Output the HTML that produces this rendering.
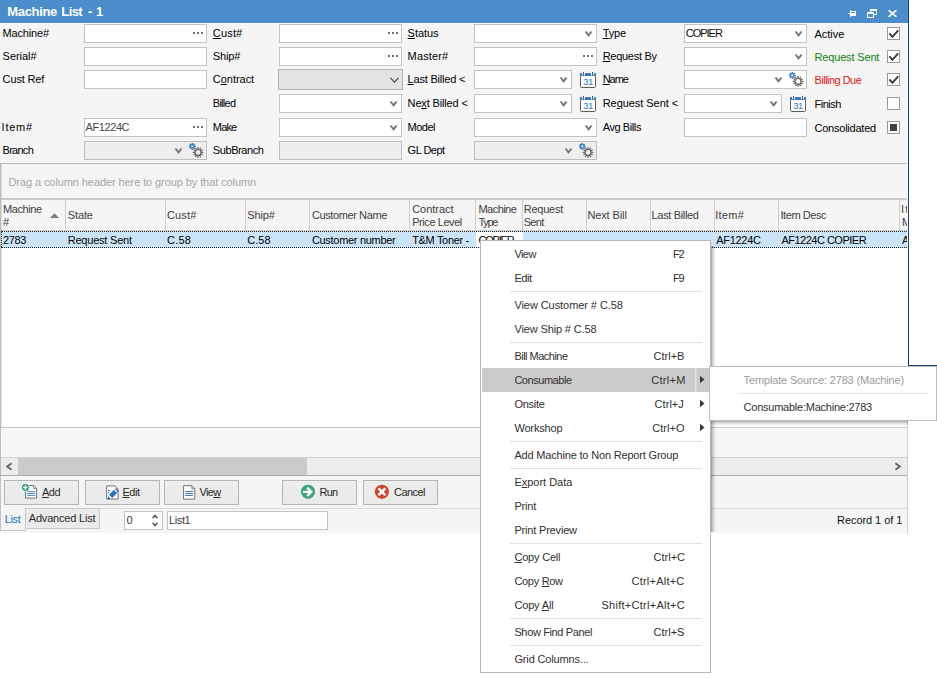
<!DOCTYPE html>
<html>
<head>
<meta charset="utf-8">
<title>Machine List - 1</title>
<style>
*{box-sizing:border-box;margin:0;padding:0}
html,body{width:937px;height:679px;overflow:hidden;background:#fff}
body{font-family:"Liberation Sans",sans-serif;font-size:11px;color:#000;position:relative}
div,span,svg{position:absolute}
u{text-decoration:underline;text-underline-offset:1px;text-decoration-thickness:1px}
#win{left:0;top:0;width:908px;height:533px;background:#f5f5f5}
#title{left:0;top:0;width:908px;height:23px;background:#4b8ccb}
#title .t{left:7px;top:3px;color:#fff;font-weight:bold;font-size:13px;line-height:17px;white-space:nowrap}
.l{line-height:14px;white-space:nowrap;height:14px}
.i{height:19px;background:#fff;border:1px solid #c3c3c3;white-space:nowrap;overflow:hidden;color:#404040}
.i .l{top:1px;left:1px}
.i.d{background:#eeeeee;border-color:#bdbdbd}
.dots{right:3px;top:7px;width:10px;height:2px;background:linear-gradient(90deg,#707070 0 2px,transparent 2px 4px,#707070 4px 6px,transparent 6px 8px,#707070 8px 10px)}
.cb{width:13px;height:13px;background:#fff;border:1px solid #9a9a9a}
.h{top:200px;height:30px;border-right:1px solid #cdcdcd;color:#404040;white-space:nowrap;overflow:hidden}
.btn{top:480px;height:25px;background:linear-gradient(#eeeeee,#e9e9e9);border:1px solid #b4b4b4;color:#2a2a2a}
.m{color:#303030}
.sep{left:510px;width:192px;height:1px;background:#e1e1e1}
</style>
</head>
<body>
<div id="win">
<div id="title">
<span class="l" style="left:7.3px;top:3px;letter-spacing:-0.35px;color:#fff;font-size:13px;font-weight:bold;line-height:17px;height:17px">Machine</span>
<span class="l" style="left:61.3px;top:3px;letter-spacing:-0.60px;color:#fff;font-size:13px;font-weight:bold;line-height:17px;height:17px">List</span>
<span class="l" style="left:88.1px;top:3px;letter-spacing:0.00px;color:#fff;font-size:13px;font-weight:bold;line-height:17px;height:17px">-</span>
<span class="l" style="left:96.1px;top:3px;letter-spacing:0.00px;color:#fff;font-size:13px;font-weight:bold;line-height:17px;height:17px">1</span>
<svg style="left:848px;top:10px" width="9" height="7" viewBox="0 0 9 7" fill="#fff" shape-rendering="crispEdges"><rect x="0" y="3" width="2" height="1"/><rect x="2" y="0" width="1" height="7"/><rect x="3" y="1" width="5" height="1"/><rect x="3" y="3" width="5" height="3"/><rect x="7" y="1" width="1" height="5"/></svg>
<svg style="left:867px;top:9px" width="10" height="9" viewBox="0 0 10 9" fill="#fff" shape-rendering="crispEdges"><rect x="3" y="0" width="7" height="2"/><rect x="3" y="0" width="1" height="3"/><rect x="9" y="0" width="1" height="6"/><rect x="7" y="5" width="3" height="1"/><rect x="0" y="3" width="7" height="2"/><rect x="0" y="3" width="1" height="6"/><rect x="6" y="3" width="1" height="6"/><rect x="0" y="8" width="7" height="1"/></svg>
<svg style="left:888px;top:10px" width="9" height="7" viewBox="0 0 9 7"><path d="M0.600 0.200L8.400 6.800M8.400 0.200L0.600 6.800" stroke="#fff" stroke-width="1.750"/></svg>
</div>
<span class="l" style="left:2.6px;top:26px;letter-spacing:-0.17px">Machine#</span>
<div class="i" style="left:84px;top:24px;width:123px"><span class="dots"></span></div>
<span class="l" style="left:2.6px;top:49px;letter-spacing:-0.03px">Serial#</span>
<div class="i" style="left:84px;top:47px;width:123px"></div>
<span class="l" style="left:2.6px;top:72px;letter-spacing:-0.14px">Cust Ref</span>
<div class="i" style="left:84px;top:70px;width:123px"></div>
<span class="l" style="left:1.6px;top:120px;letter-spacing:0.75px">Item#</span>
<div class="i" style="left:84px;top:118px;width:123px"><span class="dots"></span></div>
<span class="l" style="left:85.6px;top:120px;letter-spacing:-0.42px;color:#4a4a4a">AF1224C</span>
<span class="l" style="left:2.6px;top:143px;letter-spacing:-0.74px">Branch</span>
<div class="i d" style="left:84px;top:141px;width:123px"><svg style="left:89px;top:5px" width="9" height="8" viewBox="0 0 9 8"><g transform="translate(0.5 0.7)"><path d="M1 0.800L4 4.700L7 0.800" fill="none" stroke="#777777" stroke-width="1.950"/></g></svg><svg style="left:103px;top:0px" width="17" height="17" viewBox="0 0 17 17"><g transform="translate(0.3 0.4)"><rect x="9.200" y="4.600" width="1.200" height="10.800" fill="#686868" transform="rotate(0 9.800 10)"/><rect x="9.200" y="4.600" width="1.200" height="10.800" fill="#686868" transform="rotate(30 9.800 10)"/><rect x="9.200" y="4.600" width="1.200" height="10.800" fill="#686868" transform="rotate(60 9.800 10)"/><rect x="9.200" y="4.600" width="1.200" height="10.800" fill="#686868" transform="rotate(90 9.800 10)"/><rect x="9.200" y="4.600" width="1.200" height="10.800" fill="#686868" transform="rotate(120 9.800 10)"/><rect x="9.200" y="4.600" width="1.200" height="10.800" fill="#686868" transform="rotate(150 9.800 10)"/><circle cx="9.800" cy="10" r="3.600" fill="#686868"/><circle cx="9.800" cy="10" r="2.300" fill="#eeeeee"/><rect x="3.300" y="0.600" width="1.400" height="6.800" fill="#3575bd" transform="rotate(0 4 4)"/><rect x="3.300" y="0.600" width="1.400" height="6.800" fill="#3575bd" transform="rotate(45 4 4)"/><rect x="3.300" y="0.600" width="1.400" height="6.800" fill="#3575bd" transform="rotate(90 4 4)"/><rect x="3.300" y="0.600" width="1.400" height="6.800" fill="#3575bd" transform="rotate(135 4 4)"/><circle cx="4" cy="4" r="2.100" fill="#3575bd"/><circle cx="4" cy="4" r="1.150" fill="#eeeeee"/></g></svg></div>
<span class="l" style="left:212.8px;top:26px;letter-spacing:0.17px"><u>C</u>ust#</span>
<div class="i" style="left:279px;top:24px;width:123px"><span class="dots"></span></div>
<span class="l" style="left:212.8px;top:49px;letter-spacing:-0.15px">Ship#</span>
<div class="i" style="left:279px;top:47px;width:123px"><span class="dots"></span></div>
<span class="l" style="left:212.8px;top:72px;letter-spacing:-0.03px">C<u>o</u>ntract</span>
<div style="left:278px;top:69px;width:125px;height:21px;background:#e3e3e3;border:1px solid #b2b2b2"><svg style="left:110px;top:7px" width="11" height="7" viewBox="0 0 11 7"><g transform="translate(0.5 0.3)"><path d="M0.900 0.600L5 4.800L9.100 0.600" fill="none" stroke="#484848" stroke-width="1.250"/></g></svg></div>
<span class="l" style="left:212.8px;top:96px;letter-spacing:-0.74px">Billed</span>
<div class="i" style="left:279px;top:94px;width:123px"><svg style="left:109px;top:5px" width="9" height="8" viewBox="0 0 9 8"><g transform="translate(0.6 0.7)"><path d="M1 0.800L4 4.700L7 0.800" fill="none" stroke="#777777" stroke-width="1.950"/></g></svg></div>
<span class="l" style="left:212.8px;top:120px;letter-spacing:-0.83px">Make</span>
<div class="i" style="left:279px;top:118px;width:123px"><svg style="left:109px;top:5px" width="9" height="8" viewBox="0 0 9 8"><g transform="translate(0.6 0.7)"><path d="M1 0.800L4 4.700L7 0.800" fill="none" stroke="#777777" stroke-width="1.950"/></g></svg></div>
<span class="l" style="left:212.8px;top:143px;letter-spacing:-0.41px">SubBranch</span>
<div class="i d" style="left:279px;top:141px;width:123px"></div>
<span class="l" style="left:407.6px;top:26px;letter-spacing:-0.04px"><u>S</u>tatus</span>
<div class="i" style="left:474px;top:24px;width:123px"><svg style="left:109px;top:5px" width="9" height="8" viewBox="0 0 9 8"><g transform="translate(0.6 0.7)"><path d="M1 0.800L4 4.700L7 0.800" fill="none" stroke="#777777" stroke-width="1.950"/></g></svg></div>
<span class="l" style="left:407.6px;top:49px;letter-spacing:0.15px">Master#</span>
<div class="i" style="left:474px;top:47px;width:123px"><span class="dots"></span></div>
<span class="l" style="left:407.6px;top:72px;letter-spacing:-0.20px"><u>L</u>ast Billed &lt;</span>
<div class="i" style="left:474px;top:70px;width:98px"><svg style="left:84px;top:5px" width="9" height="8" viewBox="0 0 9 8"><g transform="translate(0.6 0.7)"><path d="M1 0.800L4 4.700L7 0.800" fill="none" stroke="#777777" stroke-width="1.950"/></g></svg></div>
<svg style="left:580px;top:72px" width="16" height="16" viewBox="0 0 16 16"><rect x="0.5" y="3" width="15" height="12.5" rx="1.2" fill="#fff" stroke="#5c5c5c" stroke-width="1"/><rect x="0" y="1" width="16" height="3" fill="#3a78bf"/><rect x="2" y="0" width="3" height="3.3" fill="#f5f5f5"/><rect x="11" y="0" width="3" height="3.3" fill="#f5f5f5"/><rect x="3" y="0" width="1" height="3.6" fill="#555"/><rect x="12" y="0" width="1" height="3.6" fill="#555"/><text x="8.1" y="13" font-size="9.5" text-anchor="middle" fill="#3a78bf" font-family="Liberation Sans" letter-spacing="-0.4">31</text></svg>
<span class="l" style="left:407.6px;top:96px;letter-spacing:-0.15px">Ne<u>x</u>t Billed &lt;</span>
<div class="i" style="left:474px;top:94px;width:98px"><svg style="left:84px;top:5px" width="9" height="8" viewBox="0 0 9 8"><g transform="translate(0.6 0.7)"><path d="M1 0.800L4 4.700L7 0.800" fill="none" stroke="#777777" stroke-width="1.950"/></g></svg></div>
<svg style="left:580px;top:96px" width="16" height="16" viewBox="0 0 16 16"><rect x="0.5" y="3" width="15" height="12.5" rx="1.2" fill="#fff" stroke="#5c5c5c" stroke-width="1"/><rect x="0" y="1" width="16" height="3" fill="#3a78bf"/><rect x="2" y="0" width="3" height="3.3" fill="#f5f5f5"/><rect x="11" y="0" width="3" height="3.3" fill="#f5f5f5"/><rect x="3" y="0" width="1" height="3.6" fill="#555"/><rect x="12" y="0" width="1" height="3.6" fill="#555"/><text x="8.1" y="13" font-size="9.5" text-anchor="middle" fill="#3a78bf" font-family="Liberation Sans" letter-spacing="-0.4">31</text></svg>
<span class="l" style="left:407.6px;top:120px;letter-spacing:-0.53px">Model</span>
<div class="i" style="left:474px;top:118px;width:123px"><svg style="left:109px;top:5px" width="9" height="8" viewBox="0 0 9 8"><g transform="translate(0.6 0.7)"><path d="M1 0.800L4 4.700L7 0.800" fill="none" stroke="#777777" stroke-width="1.950"/></g></svg></div>
<span class="l" style="left:407.6px;top:143px;letter-spacing:-0.50px">GL Dept</span>
<div class="i d" style="left:474px;top:141px;width:123px"><svg style="left:89px;top:5px" width="9" height="8" viewBox="0 0 9 8"><g transform="translate(0.5 0.7)"><path d="M1 0.800L4 4.700L7 0.800" fill="none" stroke="#777777" stroke-width="1.950"/></g></svg><svg style="left:103px;top:0px" width="17" height="17" viewBox="0 0 17 17"><g transform="translate(0.3 0.4)"><rect x="9.200" y="4.600" width="1.200" height="10.800" fill="#686868" transform="rotate(0 9.800 10)"/><rect x="9.200" y="4.600" width="1.200" height="10.800" fill="#686868" transform="rotate(30 9.800 10)"/><rect x="9.200" y="4.600" width="1.200" height="10.800" fill="#686868" transform="rotate(60 9.800 10)"/><rect x="9.200" y="4.600" width="1.200" height="10.800" fill="#686868" transform="rotate(90 9.800 10)"/><rect x="9.200" y="4.600" width="1.200" height="10.800" fill="#686868" transform="rotate(120 9.800 10)"/><rect x="9.200" y="4.600" width="1.200" height="10.800" fill="#686868" transform="rotate(150 9.800 10)"/><circle cx="9.800" cy="10" r="3.600" fill="#686868"/><circle cx="9.800" cy="10" r="2.300" fill="#eeeeee"/><rect x="3.300" y="0.600" width="1.400" height="6.800" fill="#3575bd" transform="rotate(0 4 4)"/><rect x="3.300" y="0.600" width="1.400" height="6.800" fill="#3575bd" transform="rotate(45 4 4)"/><rect x="3.300" y="0.600" width="1.400" height="6.800" fill="#3575bd" transform="rotate(90 4 4)"/><rect x="3.300" y="0.600" width="1.400" height="6.800" fill="#3575bd" transform="rotate(135 4 4)"/><circle cx="4" cy="4" r="2.100" fill="#3575bd"/><circle cx="4" cy="4" r="1.150" fill="#eeeeee"/></g></svg></div>
<span class="l" style="left:602.7px;top:26px;letter-spacing:-0.13px"><u>T</u>ype</span>
<div class="i" style="left:684px;top:24px;width:123px"><svg style="left:109px;top:5px" width="9" height="8" viewBox="0 0 9 8"><g transform="translate(0.6 0.7)"><path d="M1 0.800L4 4.700L7 0.800" fill="none" stroke="#777777" stroke-width="1.950"/></g></svg></div>
<span class="l" style="left:685.8px;top:26px;letter-spacing:-1.02px;color:#0a0a0a">COPIER</span>
<span class="l" style="left:602.7px;top:49px;letter-spacing:-0.28px"><u>R</u>equest By</span>
<div class="i" style="left:684px;top:47px;width:123px"><svg style="left:109px;top:5px" width="9" height="8" viewBox="0 0 9 8"><g transform="translate(0.6 0.7)"><path d="M1 0.800L4 4.700L7 0.800" fill="none" stroke="#777777" stroke-width="1.950"/></g></svg></div>
<span class="l" style="left:602.7px;top:72px;letter-spacing:-1.03px"><u>N</u>ame</span>
<div class="i" style="left:684px;top:70px;width:123px"><svg style="left:89px;top:5px" width="9" height="8" viewBox="0 0 9 8"><g transform="translate(0.5 0.7)"><path d="M1 0.800L4 4.700L7 0.800" fill="none" stroke="#777777" stroke-width="1.950"/></g></svg><svg style="left:103px;top:0px" width="17" height="17" viewBox="0 0 17 17"><g transform="translate(0.3 0.4)"><rect x="9.200" y="4.600" width="1.200" height="10.800" fill="#686868" transform="rotate(0 9.800 10)"/><rect x="9.200" y="4.600" width="1.200" height="10.800" fill="#686868" transform="rotate(30 9.800 10)"/><rect x="9.200" y="4.600" width="1.200" height="10.800" fill="#686868" transform="rotate(60 9.800 10)"/><rect x="9.200" y="4.600" width="1.200" height="10.800" fill="#686868" transform="rotate(90 9.800 10)"/><rect x="9.200" y="4.600" width="1.200" height="10.800" fill="#686868" transform="rotate(120 9.800 10)"/><rect x="9.200" y="4.600" width="1.200" height="10.800" fill="#686868" transform="rotate(150 9.800 10)"/><circle cx="9.800" cy="10" r="3.600" fill="#686868"/><circle cx="9.800" cy="10" r="2.300" fill="#fff"/><rect x="3.300" y="0.600" width="1.400" height="6.800" fill="#3575bd" transform="rotate(0 4 4)"/><rect x="3.300" y="0.600" width="1.400" height="6.800" fill="#3575bd" transform="rotate(45 4 4)"/><rect x="3.300" y="0.600" width="1.400" height="6.800" fill="#3575bd" transform="rotate(90 4 4)"/><rect x="3.300" y="0.600" width="1.400" height="6.800" fill="#3575bd" transform="rotate(135 4 4)"/><circle cx="4" cy="4" r="2.100" fill="#3575bd"/><circle cx="4" cy="4" r="1.150" fill="#fff"/></g></svg></div>
<span class="l" style="left:602.7px;top:96px;letter-spacing:-0.05px">Re<u>q</u>uest Sent &lt;</span>
<div class="i" style="left:684px;top:94px;width:98px"><svg style="left:84px;top:5px" width="9" height="8" viewBox="0 0 9 8"><g transform="translate(0.6 0.7)"><path d="M1 0.800L4 4.700L7 0.800" fill="none" stroke="#777777" stroke-width="1.950"/></g></svg></div>
<svg style="left:790px;top:96px" width="16" height="16" viewBox="0 0 16 16"><rect x="0.5" y="3" width="15" height="12.5" rx="1.2" fill="#fff" stroke="#5c5c5c" stroke-width="1"/><rect x="0" y="1" width="16" height="3" fill="#3a78bf"/><rect x="2" y="0" width="3" height="3.3" fill="#f5f5f5"/><rect x="11" y="0" width="3" height="3.3" fill="#f5f5f5"/><rect x="3" y="0" width="1" height="3.6" fill="#555"/><rect x="12" y="0" width="1" height="3.6" fill="#555"/><text x="8.1" y="13" font-size="9.5" text-anchor="middle" fill="#3a78bf" font-family="Liberation Sans" letter-spacing="-0.4">31</text></svg>
<span class="l" style="left:602.7px;top:120px;letter-spacing:-0.41px">Avg Bills</span>
<div class="i" style="left:684px;top:118px;width:123px"></div>
<span class="l" style="left:814.5px;top:27px;letter-spacing:-0.02px">Active</span>
<div class="cb" style="left:887px;top:27px"><svg style="left:0;top:0" width="11" height="11" viewBox="0 0 11 11"><path d="M1.4 5.4L4.4 8.9L10.2 2.4" fill="none" stroke="#3a3a3a" stroke-width="1.9"/></svg></div>
<span class="l" style="left:814.5px;top:50px;letter-spacing:-0.16px;color:#128012">Request Sent</span>
<div class="cb" style="left:887px;top:50px"><svg style="left:0;top:0" width="11" height="11" viewBox="0 0 11 11"><path d="M1.4 5.4L4.4 8.9L10.2 2.4" fill="none" stroke="#3a3a3a" stroke-width="1.9"/></svg></div>
<span class="l" style="left:814.5px;top:73px;letter-spacing:-0.53px;color:#e31515">Billing Due</span>
<div class="cb" style="left:887px;top:73px"><svg style="left:0;top:0" width="11" height="11" viewBox="0 0 11 11"><path d="M1.4 5.4L4.4 8.9L10.2 2.4" fill="none" stroke="#3a3a3a" stroke-width="1.9"/></svg></div>
<span class="l" style="left:814.5px;top:97px;letter-spacing:-0.50px">Finish</span>
<div class="cb" style="left:887px;top:97px"></div>
<span class="l" style="left:814.5px;top:121px;letter-spacing:-0.23px">Consolidated</span>
<div class="cb" style="left:887px;top:121px"><span style="left:2px;top:2px;width:7px;height:7px;background:#404040"></span></div>
<div style="left:0;top:163px;width:907px;height:313px;background:#fff;border:1px solid #bcbcbc;border-right:none;border-bottom-color:#ababab"></div>
<div style="left:1px;top:164px;width:906px;height:34px;background:#f5f5f5"></div>
<span class="l" style="left:8.5px;top:175px;letter-spacing:-0.09px;color:#a6a6a6">Drag a column header here to group by that column</span>
<div style="left:1px;top:198px;width:906px;height:2px;background:#c8c8c8"></div>
<div style="left:1px;top:200px;width:906px;height:30px;background:#f5f5f5"></div>
<div style="left:1px;top:230px;width:906px;height:1px;background:#cdcdcd"></div>
<div class="h" style="left:1px;width:65px;"></div>
<span class="l" style="left:3.0px;top:202px;letter-spacing:-0.40px;color:#404040">Machine</span>
<span class="l" style="left:3.0px;top:215px;letter-spacing:0.00px;color:#404040">#</span>
<div class="h" style="left:65px;width:101px;"></div>
<span class="l" style="left:67.7px;top:208px;letter-spacing:-0.10px;color:#404040">State</span>
<div class="h" style="left:165px;width:81px;"></div>
<span class="l" style="left:167.0px;top:208px;letter-spacing:0.15px;color:#404040">Cust#</span>
<div class="h" style="left:245px;width:65px;"></div>
<span class="l" style="left:247.2px;top:208px;letter-spacing:-0.10px;color:#404040">Ship#</span>
<div class="h" style="left:309px;width:101px;"></div>
<span class="l" style="left:311.9px;top:208px;letter-spacing:-0.39px;color:#404040">Customer Name</span>
<div class="h" style="left:409px;width:67px;"></div>
<span class="l" style="left:412.2px;top:202px;letter-spacing:-0.04px;color:#404040">Contract</span>
<span class="l" style="left:412.2px;top:215px;letter-spacing:-0.43px;color:#404040">Price Level</span>
<div class="h" style="left:475px;width:48px;"></div>
<span class="l" style="left:478.5px;top:202px;letter-spacing:-0.55px;color:#404040">Machine</span>
<span class="l" style="left:478.5px;top:215px;letter-spacing:-1.30px;color:#404040">Type</span>
<div class="h" style="left:522px;width:65px;"></div>
<span class="l" style="left:523.7px;top:202px;letter-spacing:-0.23px;color:#404040">Request</span>
<span class="l" style="left:523.7px;top:215px;letter-spacing:-0.67px;color:#404040">Sent</span>
<div class="h" style="left:586px;width:65px;"></div>
<span class="l" style="left:587.4px;top:208px;letter-spacing:-0.11px;color:#404040">Next Bill</span>
<div class="h" style="left:650px;width:65px;"></div>
<span class="l" style="left:651.6px;top:208px;letter-spacing:-0.34px;color:#404040">Last Billed</span>
<div class="h" style="left:714px;width:65px;"></div>
<span class="l" style="left:715.2px;top:208px;letter-spacing:0.27px;color:#404040">Item#</span>
<div class="h" style="left:778px;width:122px;"></div>
<span class="l" style="left:780.4px;top:208px;letter-spacing:-0.41px;color:#404040">Item Desc</span>
<div class="h" style="left:899px;width:8px;border-right:none;"></div>
<span class="l" style="left:901.0px;top:202px;letter-spacing:1.30px;color:#404040;max-width:6px;overflow:hidden">It</span>
<span class="l" style="left:902.0px;top:215px;letter-spacing:0.00px;color:#404040;max-width:6px;overflow:hidden">M</span>
<div style="left:1px;top:164px;width:1px;height:311px;background:rgba(0,0,0,0.10)"></div>
<svg style="left:50px;top:213px" width="9" height="5" viewBox="0 0 9 5"><path d="M0 5L4.5 0.3L9 5z" fill="#7d7d7d"/></svg>
<div style="left:1px;top:231px;width:906px;height:17px;background:#cce4f7;border-top:1px dotted #222;border-bottom:1px dotted #222"></div>
<div style="left:1px;top:232px;width:1px;height:15px;border-left:1px dotted #222"></div>
<div style="left:476px;top:232px;width:47px;height:15px;background:#fff"></div>
<span class="l" style="left:3.0px;top:233px;letter-spacing:-0.33px">2783</span>
<span class="l" style="left:67.7px;top:233px;letter-spacing:-0.21px">Request Sent</span>
<span class="l" style="left:167.0px;top:233px;letter-spacing:0.20px">C.58</span>
<span class="l" style="left:247.2px;top:233px;letter-spacing:0.03px">C.58</span>
<span class="l" style="left:311.9px;top:233px;letter-spacing:-0.30px">Customer number</span>
<span class="l" style="left:412.2px;top:233px;letter-spacing:-0.33px">T&amp;M Toner -</span>
<span class="l" style="left:478.5px;top:233px;letter-spacing:-1.20px">COPIER</span>
<span class="l" style="left:716.2px;top:233px;letter-spacing:-0.28px">AF1224C</span>
<span class="l" style="left:781.4px;top:233px;letter-spacing:-0.50px">AF1224C COPIER</span>
<span class="l" style="left:902.0px;top:233px;letter-spacing:0.00px;max-width:6px;overflow:hidden">A</span>
<div style="left:1px;top:427px;width:906px;height:1px;background:#c8c8c8"></div>
<div style="left:1px;top:428px;width:906px;height:29px;background:#f6f6f6"></div>
<div style="left:1px;top:457px;width:906px;height:1px;background:#d0d0d0"></div>
<div style="left:1px;top:458px;width:906px;height:17px;background:#ececec"></div>
<div style="left:18px;top:458px;width:289px;height:17px;background:#cbcbcb"></div>
<svg style="left:5px;top:462px" width="8" height="9" viewBox="0 0 8 9"><path d="M6.600 1.300L2.200 4.500l4.400 3.200" fill="none" stroke="#636363" stroke-width="1.800"/></svg>
<svg style="left:894px;top:462px" width="8" height="9" viewBox="0 0 8 9"><path d="M1.400 1.300L5.800 4.500L1.400 7.700" fill="none" stroke="#636363" stroke-width="1.800"/></svg>
<div class="btn" style="left:4px;width:75px"><svg style="left:17px;top:3px" width="16" height="16" viewBox="0 0 16 16"><path d="M3.600 1.500h8l3 3v9.600h-11z" fill="#fff" stroke="#727272"/><path d="M11.600 1.500v3h3" fill="none" stroke="#727272" stroke-width="0.800"/><path d="M5.200 7.600h8M5.200 9.500h8M5.200 11.400h8" stroke="#4a82c4" stroke-width="1"/><circle cx="3.400" cy="3.500" r="4.200" fill="#f0f0f0"/><circle cx="3.400" cy="3.500" r="3.500" fill="#2e9d6c"/><path d="M3.400 1.300v4.400M1.200 3.500h4.400" stroke="#fff" stroke-width="1.300"/></svg></div>
<span class="l" style="left:41.9px;top:485px;letter-spacing:-0.45px;color:#2a2a2a"><u>A</u>dd</span>
<div class="btn" style="left:85px;width:75px"><svg style="left:20px;top:4px;overflow:visible" width="16" height="17" viewBox="0 0 16 17"><path d="M0.700 0.900h8.300l3 3v10.100h-11.300z" fill="#fff" stroke="#727272"/><path d="M2 5.500h2M2 7.500h1" stroke="#3b78bf" stroke-width="1"/><g transform="translate(1.300 14.700) rotate(-45)" fill="#2f6fbd"><path d="M0 0L3.100 -1.700L3.100 1.700z"/><rect x="4.700" y="-2.300" width="6.900" height="4.600"/><rect x="13" y="-2.300" width="1.400" height="4.600"/></g></svg></div>
<span class="l" style="left:122.5px;top:485px;letter-spacing:-0.50px;color:#2a2a2a"><u>E</u>dit</span>
<div class="btn" style="left:164px;width:75px"><svg style="left:18px;top:4px" width="13" height="15" viewBox="0 0 13 15"><path d="M0.600 0.700h8.200l3 3v10.400h-11.200z" fill="#fff" stroke="#727272"/><path d="M8.800 0.700v3h3" fill="none" stroke="#727272" stroke-width="0.800"/><path d="M2.200 6.500h7.800M2.200 8.500h7.800M2.200 10.500h7.800" stroke="#4a82c4" stroke-width="1"/></svg></div>
<span class="l" style="left:199.6px;top:485px;letter-spacing:-0.70px;color:#2a2a2a">Vie<u>w</u></span>
<div class="btn" style="left:282px;width:75px"><svg style="left:17px;top:3px" width="16" height="16" viewBox="0 0 16 16"><g transform="translate(0.5 0.3)"><circle cx="7.500" cy="7.500" r="7.100" fill="#3ca57a"/><path d="M2.600 7.500h8M6.700 3.300l4.200 4.200L6.700 11.700" fill="none" stroke="#fff" stroke-width="2.300"/></g></svg></div>
<span class="l" style="left:319.4px;top:485px;letter-spacing:-0.70px;color:#2a2a2a">Run</span>
<div class="btn" style="left:363px;width:75px"><svg style="left:10px;top:3px" width="16" height="16" viewBox="0 0 16 16"><g transform="translate(0.4 0.3)"><circle cx="7.500" cy="7.500" r="7.100" fill="#d0442f"/><path d="M4.100 4.100l6.800 6.800M10.900 4.100l-6.800 6.800" stroke="#fff" stroke-width="2.500"/></g></svg></div>
<span class="l" style="left:394.0px;top:485px;letter-spacing:-0.54px;color:#2a2a2a">Cancel</span>
<div style="left:26px;top:508px;width:881px;height:1px;background:#d8d8d8"></div>
<div style="left:0;top:476px;width:26px;height:55px;border-left:1px solid #c2c2c2;border-bottom:1px solid #c6c6c6"></div>
<div style="left:25px;top:528px;width:1px;height:3px;background:#c6c6c6"></div>
<span class="l" style="left:4.8px;top:512px;letter-spacing:-0.40px;color:#1c6fc0">List</span>
<div style="left:25px;top:508px;width:75px;height:21px;background:#ebebeb;border:1px solid #c8c8c8"></div>
<span class="l" style="left:28.8px;top:511px;letter-spacing:-0.19px;color:#2a2a2a">Advanced List</span>
<div class="i" style="left:124px;top:511px;width:39px"></div>
<span class="l" style="left:126.4px;top:513px;letter-spacing:0.00px;color:#404040">0</span>
<svg style="left:152px;top:514px" width="6" height="13" viewBox="0 0 6 13"><path d="M0.600 4.300L3 1.500L5.400 4.300M0.600 8.700L3 11.500L5.400 8.700" fill="none" stroke="#555" stroke-width="1.500"/></svg>
<div class="i" style="left:167px;top:511px;width:161px"></div>
<span class="l" style="left:169.0px;top:513px;letter-spacing:-0.38px;color:#404040">List1</span>
<span class="l" style="left:837.1px;top:513px;letter-spacing:-0.07px;color:#111">Record 1 of 1</span>
</div>
<div style="left:907px;top:23px;width:1px;height:510px;background:#fafafa"></div>
<div style="left:908px;top:0;width:1px;height:366px;background:#1d3f70"></div>
<div style="left:908px;top:365px;width:29px;height:1px;background:#1d3f70"></div>
<div style="left:907px;top:421px;width:1px;height:112px;background:#cfcfcf"></div>
<div style="left:711px;top:246px;width:5px;height:120px;background:linear-gradient(90deg,rgba(0,0,0,0.36),rgba(0,0,0,0.13) 45%,rgba(0,0,0,0))"></div>
<div style="left:711px;top:421px;width:5px;height:111px;background:linear-gradient(90deg,rgba(0,0,0,0.36),rgba(0,0,0,0.13) 45%,rgba(0,0,0,0))"></div>
<div style="left:480px;top:240px;width:231px;height:433px;background:#fff;border:1px solid #b7b7b7"></div>
<div style="left:482px;top:368px;width:228px;height:24px;background:#cbcbcb"></div>
<div style="left:695px;top:368px;width:1px;height:24px;background:#dcebf9"></div><div style="left:696px;top:368px;width:1px;height:24px;background:#d6d6d6"></div>
<span class="l" style="left:514.4px;top:247px;letter-spacing:-0.57px;color:#303030">View</span>
<span class="l" style="left:673.1px;top:247px;letter-spacing:-1.30px;color:#303030">F2</span>
<span class="l" style="left:514.4px;top:271px;letter-spacing:-0.40px;color:#303030">Edit</span>
<span class="l" style="left:673.1px;top:271px;letter-spacing:-1.30px;color:#303030">F9</span>
<span class="l" style="left:514.4px;top:298px;letter-spacing:-0.07px;color:#303030">View Customer # C.58</span>
<span class="l" style="left:514.4px;top:322px;letter-spacing:-0.13px;color:#303030">View Ship # C.58</span>
<span class="l" style="left:514.4px;top:349px;letter-spacing:-0.51px;color:#303030">Bill Machine</span>
<span class="l" style="left:653.6px;top:349px;letter-spacing:0.00px;color:#303030">Ctrl+B</span>
<span class="l" style="left:514.4px;top:373px;letter-spacing:-0.46px;color:#303030">Consumable</span>
<span class="l" style="left:651.3px;top:373px;letter-spacing:0.26px;color:#303030">Ctrl+M</span>
<span class="l" style="left:514.4px;top:397px;letter-spacing:-0.24px;color:#303030">Onsite</span>
<span class="l" style="left:654.6px;top:397px;letter-spacing:0.04px;color:#303030">Ctrl+J</span>
<span class="l" style="left:514.4px;top:421px;letter-spacing:-0.16px;color:#303030">Workshop</span>
<span class="l" style="left:652.2px;top:421px;letter-spacing:0.08px;color:#303030">Ctrl+O</span>
<span class="l" style="left:514.4px;top:448px;letter-spacing:-0.18px;color:#303030">Add Machine to Non Report Group</span>
<span class="l" style="left:514.4px;top:475px;letter-spacing:-0.01px;color:#303030">E<u>x</u>port Data</span>
<span class="l" style="left:514.4px;top:499px;letter-spacing:-0.17px;color:#303030">Print</span>
<span class="l" style="left:514.4px;top:523px;letter-spacing:-0.18px;color:#303030">Print Preview</span>
<span class="l" style="left:514.4px;top:550px;letter-spacing:-0.20px;color:#303030"><u>C</u>opy Cell</span>
<span class="l" style="left:653.6px;top:550px;letter-spacing:0.00px;color:#303030">Ctrl+C</span>
<span class="l" style="left:514.4px;top:574px;letter-spacing:-0.30px;color:#303030">Copy <u>R</u>ow</span>
<span class="l" style="left:631.5px;top:574px;letter-spacing:0.23px;color:#303030">Ctrl+Alt+C</span>
<span class="l" style="left:514.4px;top:598px;letter-spacing:-0.16px;color:#303030">Copy <u>A</u>ll</span>
<span class="l" style="left:601.4px;top:598px;letter-spacing:0.28px;color:#303030">Shift+Ctrl+Alt+C</span>
<span class="l" style="left:514.4px;top:625px;letter-spacing:-0.36px;color:#303030">Show Find Panel</span>
<span class="l" style="left:653.6px;top:625px;letter-spacing:0.00px;color:#303030">Ctrl+S</span>
<span class="l" style="left:514.4px;top:652px;letter-spacing:-0.14px;color:#303030">Grid Columns...</span>
<div class="sep" style="top:291px"></div>
<div class="sep" style="top:342px"></div>
<div class="sep" style="top:441px"></div>
<div class="sep" style="top:468px"></div>
<div class="sep" style="top:543px"></div>
<div class="sep" style="top:618px"></div>
<div class="sep" style="top:645px"></div>
<svg style="left:700px;top:375px" width="6" height="9" viewBox="0 0 6 9"><g transform="translate(0 0.5)"><path d="M0 0.200L4.500 4L0 7.800z" fill="#3a3a3a"/></g></svg>
<svg style="left:700px;top:399px" width="6" height="9" viewBox="0 0 6 9"><g transform="translate(0 0.5)"><path d="M0 0.200L4.500 4L0 7.800z" fill="#3a3a3a"/></g></svg>
<svg style="left:700px;top:423px" width="6" height="9" viewBox="0 0 6 9"><g transform="translate(0 0.5)"><path d="M0 0.200L4.500 4L0 7.800z" fill="#3a3a3a"/></g></svg>
<div style="left:711px;top:421px;width:197px;height:5px;background:linear-gradient(180deg,rgba(0,0,0,0.33),rgba(0,0,0,0.12) 45%,rgba(0,0,0,0))"></div>
<div style="left:709px;top:366px;width:228px;height:55px;background:#fff;border:1px solid #bdbdbd"></div>
<span class="l" style="left:743.6px;top:373px;letter-spacing:-0.15px;color:#9b9b9b">Template Source: 2783 (Machine)</span>
<div style="left:739px;top:393px;width:189px;height:1px;background:#e1e1e1"></div>
<span class="l" style="left:743.6px;top:400px;letter-spacing:-0.24px;color:#303030">Consumable:Machine:2783</span>
</body>
</html>
